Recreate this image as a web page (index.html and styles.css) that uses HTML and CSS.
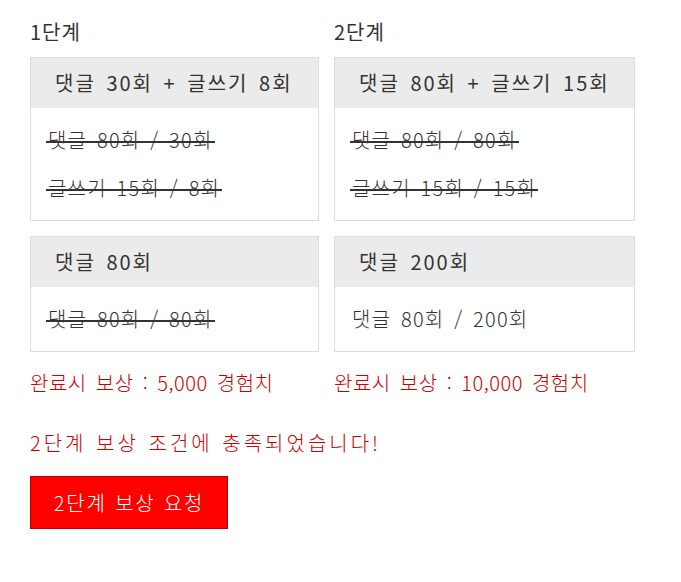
FILE: index.html
```html
<!DOCTYPE html>
<html lang="ko">
<head>
    <meta charset="UTF-8">
    <meta name="viewport" content="width=device-width, initial-scale=1.0">
    <title>단계별 보상</title>
    <link rel="stylesheet" href="styles.css">
</head>
<body>
    <div class="wrap">
        <!-- 단계 목록 -->
        <div class="steps">
            <div class="step step-1">
                <h3 class="step-title">1단계</h3>
                <div class="mission">
                    <div class="mission-head">댓글 30회 + 글쓰기 8회</div>
                    <div class="mission-body">
                        <p><span class="done">댓글 80회 / 30회</span></p>
                        <p><span class="done">글쓰기 15회 / 8회</span></p>
                    </div>
                </div>
                <div class="mission">
                    <div class="mission-head">댓글 80회</div>
                    <div class="mission-body">
                        <p><span class="done">댓글 80회 / 80회</span></p>
                    </div>
                </div>
                <p class="reward">완료시 보상 : 5,000 경험치</p>
            </div>

            <div class="step step-2">
                <h3 class="step-title">2단계</h3>
                <div class="mission">
                    <div class="mission-head">댓글 80회 + 글쓰기 15회</div>
                    <div class="mission-body">
                        <p><span class="done">댓글 80회 / 80회</span></p>
                        <p><span class="done">글쓰기 15회 / 15회</span></p>
                    </div>
                </div>
                <div class="mission">
                    <div class="mission-head">댓글 200회</div>
                    <div class="mission-body">
                        <p><span>댓글 80회 / 200회</span></p>
                    </div>
                </div>
                <p class="reward">완료시 보상 : 10,000 경험치</p>
            </div>
        </div>

        <!-- 보상 요청 -->
        <p class="notice">2단계 보상 조건에 충족되었습니다!</p>
        <button class="request">2단계 보상 요청</button>
    </div>
</body>
</html>
```

FILE: styles.css
```css
body {
    margin: 0;
    font-family: "Noto Sans CJK KR", "Noto Sans", sans-serif;
    color: #333333;
    background-color: #ffffff;
}

.wrap {
    padding: 20px 30px;
}

.steps {
    display: flex;
    gap: 15px;
}

.step-1 {
    width: 289px;
}

.step-2 {
    width: 301px;
}

.step-title {
    margin: 0 0 13px;
    font-size: 20px;
    font-weight: normal;
    line-height: 24px;
    letter-spacing: 1px;
}

.mission {
    border: 1px solid #dcdcdc;
    margin-bottom: 15px;
}

.mission-head {
    height: 50px;
    padding: 0 24px;
    line-height: 49px;
    font-size: 20px;
    letter-spacing: 2px;
    word-spacing: 3px;
    background-color: #ebebeb;
    white-space: nowrap;
}

.mission-body {
    padding: 8px 15px;
}

.mission-body p {
    margin: 0;
    line-height: 48px;
    font-size: 20px;
    font-weight: 300;
    letter-spacing: 1.2px;
    word-spacing: 3px;
    white-space: nowrap;
}

.mission-body span {
    padding: 0 2px;
}

.mission-body .done {
    background: linear-gradient(#333333, #333333) no-repeat 0 58% / 100% 2px;
}

/* 위 박스 margin-bottom 과 겹치므로 19px */
.reward {
    margin: 19px 0 0;
    font-size: 20px;
    line-height: 24px;
    font-weight: 300;
    letter-spacing: 0.5px;
    word-spacing: 3px;
    color: #cc0000;
    white-space: nowrap;
}

.notice {
    margin: 36px 0 21px;
    font-size: 20px;
    line-height: 24px;
    font-weight: 300;
    letter-spacing: 3px;
    word-spacing: 1px;
    color: #cc0000;
}

.request {
    width: 198px;
    height: 53px;
    padding: 0;
    font-family: inherit;
    font-size: 20px;
    font-weight: 300;
    letter-spacing: 1.8px;
    word-spacing: 1px;
    color: #ffffff;
    background-color: #ff0000;
    border: 1px solid #b80000;
    cursor: pointer;
}
```
